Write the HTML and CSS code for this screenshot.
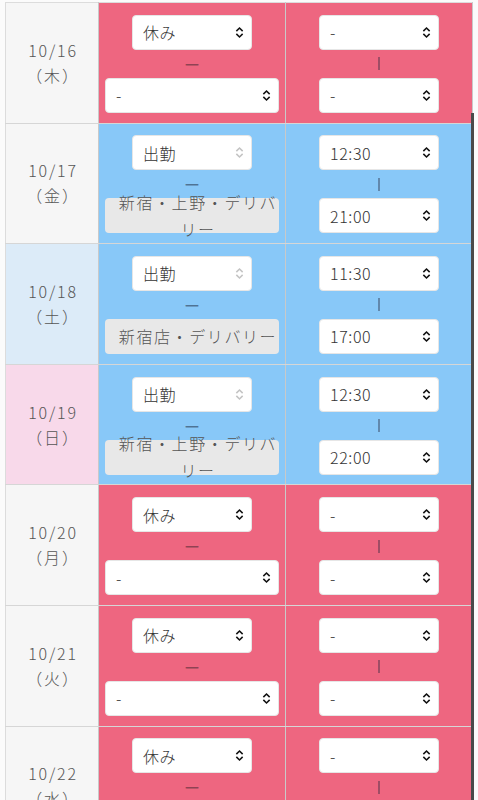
FILE: index.html
```html
<!DOCTYPE html>
<html lang="ja">
<head>
    <meta charset="UTF-8">
    <meta name="viewport" content="width=device-width, initial-scale=1.0">
    <title>シフト提出</title>
    <link rel="stylesheet" href="styles.css">
</head>
<body>
    <div class="wrap">
        <table class="shift-table">
            <colgroup>
                <col class="col-date">
                <col class="col-type">
                <col class="col-time">
            </colgroup>
            <tbody>
                <tr class="off">
                    <td class="date">10/16<br>（木）</td>
                    <td>
                        <div class="cell">
                            <div class="sel sel-sm"><select><option>休み</option></select><svg class="chev" viewBox="0 0 10 16"><path d="M1.5 6.5L5 3l3.5 3.5M1.5 9.5L5 13l3.5-3.5"/></svg></div>
                            <div class="sep">ー</div>
                            <div class="sel sel-lg"><select><option>-</option></select><svg class="chev" viewBox="0 0 10 16"><path d="M1.5 6.5L5 3l3.5 3.5M1.5 9.5L5 13l3.5-3.5"/></svg></div>
                        </div>
                    </td>
                    <td>
                        <div class="cell">
                            <div class="sel sel-sm"><select><option>-</option></select><svg class="chev" viewBox="0 0 10 16"><path d="M1.5 6.5L5 3l3.5 3.5M1.5 9.5L5 13l3.5-3.5"/></svg></div>
                            <div class="sep sep-v"></div>
                            <div class="sel sel-sm"><select><option>-</option></select><svg class="chev" viewBox="0 0 10 16"><path d="M1.5 6.5L5 3l3.5 3.5M1.5 9.5L5 13l3.5-3.5"/></svg></div>
                        </div>
                    </td>
                </tr>
                <tr class="on">
                    <td class="date">10/17<br>（金）</td>
                    <td>
                        <div class="cell">
                            <div class="sel sel-sm disabled"><select disabled><option>出勤</option></select><svg class="chev" viewBox="0 0 10 16"><path d="M1.5 6.5L5 3l3.5 3.5M1.5 9.5L5 13l3.5-3.5"/></svg></div>
                            <div class="sep">ー</div>
                            <button class="shop-btn" type="button">新宿・上野・デリバリー</button>
                        </div>
                    </td>
                    <td>
                        <div class="cell">
                            <div class="sel sel-sm"><select><option>12:30</option></select><svg class="chev" viewBox="0 0 10 16"><path d="M1.5 6.5L5 3l3.5 3.5M1.5 9.5L5 13l3.5-3.5"/></svg></div>
                            <div class="sep sep-v"></div>
                            <div class="sel sel-sm"><select><option>21:00</option></select><svg class="chev" viewBox="0 0 10 16"><path d="M1.5 6.5L5 3l3.5 3.5M1.5 9.5L5 13l3.5-3.5"/></svg></div>
                        </div>
                    </td>
                </tr>
                <tr class="on sat">
                    <td class="date">10/18<br>（土）</td>
                    <td>
                        <div class="cell">
                            <div class="sel sel-sm disabled"><select disabled><option>出勤</option></select><svg class="chev" viewBox="0 0 10 16"><path d="M1.5 6.5L5 3l3.5 3.5M1.5 9.5L5 13l3.5-3.5"/></svg></div>
                            <div class="sep">ー</div>
                            <button class="shop-btn" type="button">新宿店・デリバリー</button>
                        </div>
                    </td>
                    <td>
                        <div class="cell">
                            <div class="sel sel-sm"><select><option>11:30</option></select><svg class="chev" viewBox="0 0 10 16"><path d="M1.5 6.5L5 3l3.5 3.5M1.5 9.5L5 13l3.5-3.5"/></svg></div>
                            <div class="sep sep-v"></div>
                            <div class="sel sel-sm"><select><option>17:00</option></select><svg class="chev" viewBox="0 0 10 16"><path d="M1.5 6.5L5 3l3.5 3.5M1.5 9.5L5 13l3.5-3.5"/></svg></div>
                        </div>
                    </td>
                </tr>
                <tr class="on sun">
                    <td class="date">10/19<br>（日）</td>
                    <td>
                        <div class="cell">
                            <div class="sel sel-sm disabled"><select disabled><option>出勤</option></select><svg class="chev" viewBox="0 0 10 16"><path d="M1.5 6.5L5 3l3.5 3.5M1.5 9.5L5 13l3.5-3.5"/></svg></div>
                            <div class="sep">ー</div>
                            <button class="shop-btn" type="button">新宿・上野・デリバリー</button>
                        </div>
                    </td>
                    <td>
                        <div class="cell">
                            <div class="sel sel-sm"><select><option>12:30</option></select><svg class="chev" viewBox="0 0 10 16"><path d="M1.5 6.5L5 3l3.5 3.5M1.5 9.5L5 13l3.5-3.5"/></svg></div>
                            <div class="sep sep-v"></div>
                            <div class="sel sel-sm"><select><option>22:00</option></select><svg class="chev" viewBox="0 0 10 16"><path d="M1.5 6.5L5 3l3.5 3.5M1.5 9.5L5 13l3.5-3.5"/></svg></div>
                        </div>
                    </td>
                </tr>
                <tr class="off">
                    <td class="date">10/20<br>（月）</td>
                    <td>
                        <div class="cell">
                            <div class="sel sel-sm"><select><option>休み</option></select><svg class="chev" viewBox="0 0 10 16"><path d="M1.5 6.5L5 3l3.5 3.5M1.5 9.5L5 13l3.5-3.5"/></svg></div>
                            <div class="sep">ー</div>
                            <div class="sel sel-lg"><select><option>-</option></select><svg class="chev" viewBox="0 0 10 16"><path d="M1.5 6.5L5 3l3.5 3.5M1.5 9.5L5 13l3.5-3.5"/></svg></div>
                        </div>
                    </td>
                    <td>
                        <div class="cell">
                            <div class="sel sel-sm"><select><option>-</option></select><svg class="chev" viewBox="0 0 10 16"><path d="M1.5 6.5L5 3l3.5 3.5M1.5 9.5L5 13l3.5-3.5"/></svg></div>
                            <div class="sep sep-v"></div>
                            <div class="sel sel-sm"><select><option>-</option></select><svg class="chev" viewBox="0 0 10 16"><path d="M1.5 6.5L5 3l3.5 3.5M1.5 9.5L5 13l3.5-3.5"/></svg></div>
                        </div>
                    </td>
                </tr>
                <tr class="off">
                    <td class="date">10/21<br>（火）</td>
                    <td>
                        <div class="cell">
                            <div class="sel sel-sm"><select><option>休み</option></select><svg class="chev" viewBox="0 0 10 16"><path d="M1.5 6.5L5 3l3.5 3.5M1.5 9.5L5 13l3.5-3.5"/></svg></div>
                            <div class="sep">ー</div>
                            <div class="sel sel-lg"><select><option>-</option></select><svg class="chev" viewBox="0 0 10 16"><path d="M1.5 6.5L5 3l3.5 3.5M1.5 9.5L5 13l3.5-3.5"/></svg></div>
                        </div>
                    </td>
                    <td>
                        <div class="cell">
                            <div class="sel sel-sm"><select><option>-</option></select><svg class="chev" viewBox="0 0 10 16"><path d="M1.5 6.5L5 3l3.5 3.5M1.5 9.5L5 13l3.5-3.5"/></svg></div>
                            <div class="sep sep-v"></div>
                            <div class="sel sel-sm"><select><option>-</option></select><svg class="chev" viewBox="0 0 10 16"><path d="M1.5 6.5L5 3l3.5 3.5M1.5 9.5L5 13l3.5-3.5"/></svg></div>
                        </div>
                    </td>
                </tr>
                <tr class="off">
                    <td class="date">10/22<br>（水）</td>
                    <td>
                        <div class="cell">
                            <div class="sel sel-sm"><select><option>休み</option></select><svg class="chev" viewBox="0 0 10 16"><path d="M1.5 6.5L5 3l3.5 3.5M1.5 9.5L5 13l3.5-3.5"/></svg></div>
                            <div class="sep">ー</div>
                            <div class="sel sel-lg"><select><option>-</option></select><svg class="chev" viewBox="0 0 10 16"><path d="M1.5 6.5L5 3l3.5 3.5M1.5 9.5L5 13l3.5-3.5"/></svg></div>
                        </div>
                    </td>
                    <td>
                        <div class="cell">
                            <div class="sel sel-sm"><select><option>-</option></select><svg class="chev" viewBox="0 0 10 16"><path d="M1.5 6.5L5 3l3.5 3.5M1.5 9.5L5 13l3.5-3.5"/></svg></div>
                            <div class="sep sep-v"></div>
                            <div class="sel sel-sm"><select><option>-</option></select><svg class="chev" viewBox="0 0 10 16"><path d="M1.5 6.5L5 3l3.5 3.5M1.5 9.5L5 13l3.5-3.5"/></svg></div>
                        </div>
                    </td>
                </tr>
            </tbody>
        </table>
    </div>
    <div class="scroll-thumb"></div>
</body>
</html>
```

FILE: styles.css
```css
* {
    margin: 0;
    padding: 0;
    box-sizing: border-box;
}

html, body {
    height: 100%;
    overflow: hidden;
}

body {
    font-family: "Noto Sans CJK JP", "Noto Sans", sans-serif;
    font-weight: 300;
    background: #fbfbfb;
    color: #333;
}

.wrap {
    padding: 2px 6px 0 5px;
}

.shift-table {
    width: 467px;
    table-layout: fixed;
    border-collapse: collapse;
    border-top: 1px solid #dcdcdc;
    border-left: 1px solid #dcdcdc;
}

.col-date {
    width: 93px;
}

.col-type,
.col-time {
    width: 187px;
}

.shift-table td {
    height: 120.6px;
    padding: 0;
    border-right: 1px solid #c9c9c9;
    border-bottom: 1px solid #d6d6d6;
    vertical-align: middle;
}

.off td {
    background: #ee6680;
}

.on td {
    background: #88c8f8;
}

.shift-table td.date {
    background: #f6f6f6;
    text-align: center;
    color: #555;
    font-size: 16px;
    line-height: 25px;
    letter-spacing: 1.8px;
    padding: 0 0 0 2px;
}

.sat td.date {
    background: #dcebf8;
}

.sun td.date {
    background: #f8d9ea;
}

.cell {
    display: flex;
    flex-direction: column;
    align-items: center;
    padding-top: 2px;
}

.sep {
    height: 28px;
    line-height: 28px;
    font-size: 16px;
    font-weight: 400;
    color: rgba(50, 30, 40, 0.5);
}

.on .sep {
    color: rgba(30, 40, 60, 0.55);
}

.sep-v {
    display: flex;
    align-items: center;
}

.sep-v::before {
    content: "";
    display: block;
    width: 1.5px;
    height: 13px;
    background: rgba(40, 40, 60, 0.4);
}

.sel {
    position: relative;
    height: 35px;
}

.sel-sm {
    width: 120px;
}

.sel-lg {
    width: 174px;
}

.sel select {
    appearance: none;
    -webkit-appearance: none;
    width: 100%;
    height: 100%;
    border: 1px solid #e6e6e6;
    border-radius: 4px;
    background: #fff;
    padding: 0 24px 0 10px;
    font-family: inherit;
    font-weight: 300;
    font-size: 16px;
    letter-spacing: 0.6px;
    color: #333;
    opacity: 1;
}

.sel .chev {
    position: absolute;
    right: 8px;
    top: 10px;
    width: 9px;
    height: 15px;
    fill: none;
    stroke: #111;
    stroke-width: 1.7;
    pointer-events: none;
}

.sel.disabled .chev {
    stroke: #c4c4c4;
}

.shop-btn {
    width: 174px;
    height: 35px;
    border: none;
    border-radius: 4px;
    background: #e8e8e8;
    padding: 0 0 0 12px;
    font-family: inherit;
    font-weight: 300;
    font-size: 16px;
    line-height: 27px;
    letter-spacing: 1.6px;
    color: #555;
    text-align: center;
    overflow: visible;
    display: flex;
    align-items: center;
    justify-content: center;
}

.scroll-thumb {
    position: fixed;
    left: 471px;
    top: 113px;
    width: 2.5px;
    height: 700px;
    background: #4a4a4a;
}
```
